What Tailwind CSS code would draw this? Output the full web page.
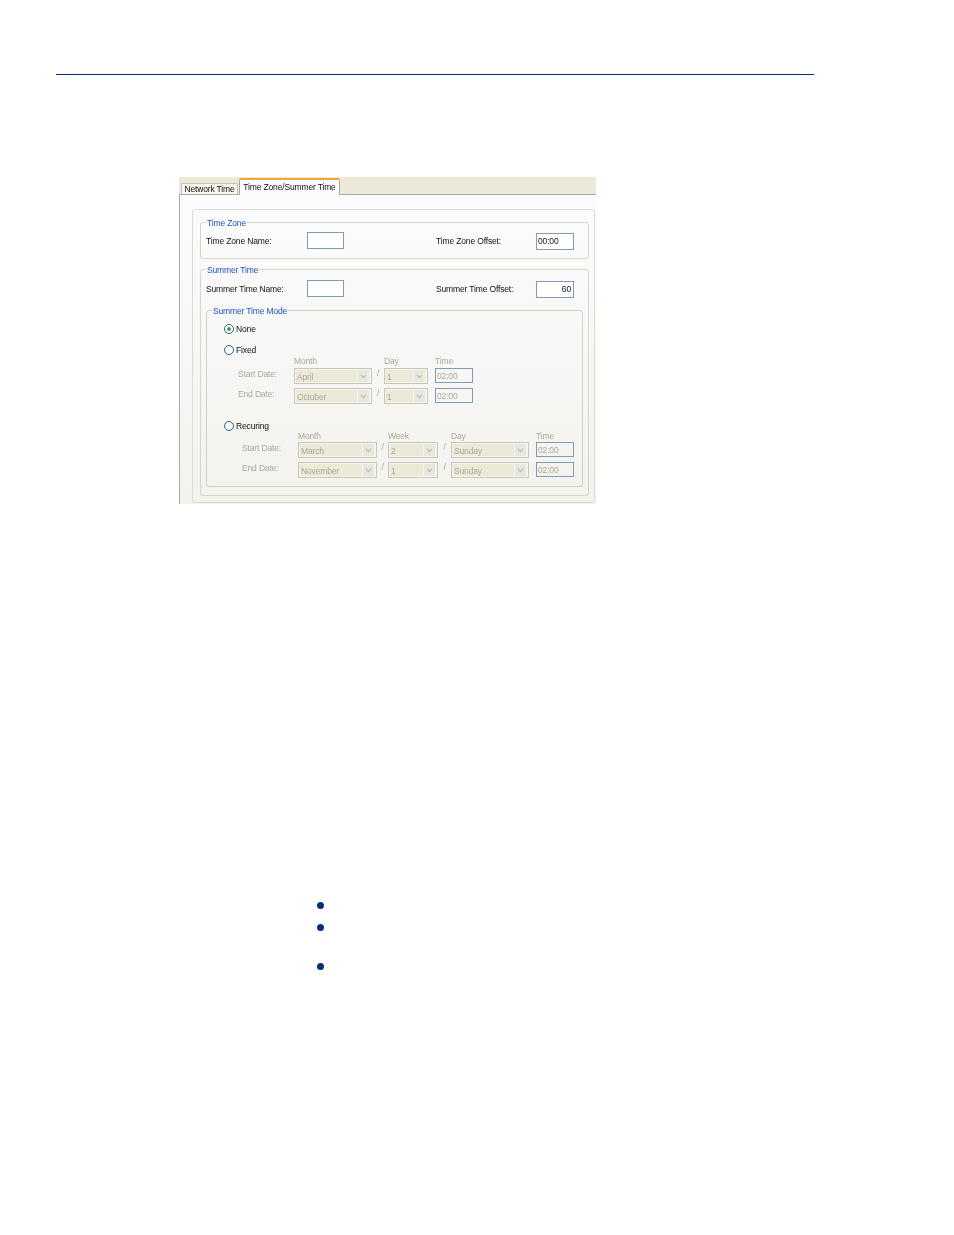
<!DOCTYPE html>
<html>
<head>
<meta charset="utf-8">
<script src="https://cdn.jsdelivr.net/npm/@tailwindcss/browser@4"></script>
</head>
<body class="bg-white font-['Liberation_Sans',sans-serif]">
<div class="w-[954px] h-[1235px] overflow-hidden pt-[74px]">
  <div class="ml-[56px] w-[758px] h-px bg-[#0b2d7b]"></div>

  <div class="ml-[179px] mt-[102px] w-[417px] h-[327px] flex flex-col text-[8.5px] tracking-[-0.15px] leading-[10px] text-[#111] whitespace-nowrap blur-[0.3px]">
    <div class="h-[18px] shrink-0 bg-[#ece9d8] border-b border-[#a9aca0] flex items-end pl-[2px]">
      <div class="w-[57px] h-[11px] bg-[#f6f5ee] border border-b-0 border-[#c3c3b4] rounded-t-[2px] flex items-center justify-center text-[#111]">Network Time</div>
      <div class="w-[101px] h-[17px] -mb-px ml-px bg-[#fcfcfe] border-x border-[#a9aca0] border-t-2 border-t-[#f0a92e] rounded-t-[2px] flex justify-center pt-[2px]">Time Zone/Summer Time</div>
    </div>
    <div class="flex-1 border-l border-[#a9aca0] bg-linear-to-b from-[#fcfcfe] to-[#f3f2ed] pl-[12px] pt-[14px]">
      <div class="w-[403px] h-[294px] border border-[#dcdcce] rounded-[3px] pl-[7px] pt-[12px]">

        <div class="relative w-[389px] h-[37px] border border-[#d6d6c6] rounded-[3px]">
          <div class="absolute -top-[5px] left-[5px] px-px bg-[#fbfbfb] text-[#1d53c4]">Time Zone</div>
          <div class="flex items-start pl-[5px] pt-[9px]">
            <div class="w-[101px] h-[17px] flex items-center">Time Zone Name:</div>
            <div class="w-[37px] h-[17px] border border-[#7f9db9] bg-white"></div>
            <div class="ml-[92px] w-[100px] h-[17px] flex items-center">Time Zone Offset:</div>
            <div class="w-[38px] h-[17px] mt-px border border-[#7f9db9] bg-white flex items-center pl-[1px] pb-px">00:00</div>
          </div>
        </div>

        <div class="relative mt-[10px] w-[389px] h-[227px] border border-[#d6d6c6] rounded-[3px]">
          <div class="absolute -top-[5px] left-[5px] px-px bg-[#f9f9f7] text-[#1d53c4]">Summer Time</div>
          <div class="flex items-start pl-[5px] pt-[10px]">
            <div class="w-[101px] h-[17px] flex items-center">Summer Time Name:</div>
            <div class="w-[37px] h-[17px] border border-[#7f9db9] bg-white"></div>
            <div class="ml-[92px] w-[100px] h-[17px] flex items-center">Summer Time Offset:</div>
            <div class="w-[38px] h-[17px] mt-px border border-[#7f9db9] bg-white flex items-center justify-end pr-[2px] pb-px">60</div>
          </div>

          <div class="relative ml-[5px] mt-[12px] w-[377px] h-[177px] border border-[#d0d0c0] rounded-[3px]">
            <div class="absolute -top-[5px] left-[5px] px-px bg-[#f7f7f4] text-[#1d53c4]">Summer Time Mode</div>

            <div class="ml-[17px] mt-[13px] h-[10px] flex items-center gap-[2px]">
              <div class="w-[10px] h-[10px] rounded-full border border-[#2f5f8f] bg-white flex items-center justify-center"><div class="w-[4px] h-[4px] rounded-full bg-[#3fa24a]"></div></div>
              <span>None</span>
            </div>

            <div class="ml-[17px] mt-[11px] h-[10px] flex items-center gap-[2px]">
              <div class="w-[10px] h-[10px] rounded-full border border-[#2f5f8f] bg-white"></div>
              <span>Fixed</span>
            </div>

            <div class="ml-[87px] mt-px h-[10px] flex text-[#aca899]">
              <div class="w-[90px]">Month</div><div class="w-[51px]">Day</div><div>Time</div>
            </div>
            <div class="ml-[31px] mt-[2px] h-[16px] flex text-[#aca899]">
              <div class="w-[56px] mt-px">Start Date:</div>
              <div class="w-[78px] h-[16px] border border-[#c9c7ba] bg-[#f4f3ee] flex p-px"><span class="flex-1 bg-[#ece9d8] pl-px pt-px flex items-center">April</span><div class="ml-px mr-px w-[11px] bg-[#e8e7df] flex items-center justify-center"><svg width="7" height="5" viewBox="0 0 7 5"><path d="M1 1l2.5 2.5L6 1" fill="none" stroke="#c2c0b6" stroke-width="1.4"/></svg></div></div>
              <div class="w-[12px] text-center">/</div>
              <div class="w-[44px] h-[16px] border border-[#c9c7ba] bg-[#f4f3ee] flex p-px"><span class="flex-1 bg-[#ece9d8] pl-px pt-px flex items-center">1</span><div class="ml-px mr-px w-[11px] bg-[#e8e7df] flex items-center justify-center"><svg width="7" height="5" viewBox="0 0 7 5"><path d="M1 1l2.5 2.5L6 1" fill="none" stroke="#c2c0b6" stroke-width="1.4"/></svg></div></div>
              <div class="ml-[7px] w-[38px] h-[15px] border border-[#7f9db9] flex items-center pl-[1px]">02:00</div>
            </div>
            <div class="ml-[31px] mt-[4px] h-[16px] flex text-[#aca899]">
              <div class="w-[56px] mt-px">End Date:</div>
              <div class="w-[78px] h-[16px] border border-[#c9c7ba] bg-[#f4f3ee] flex p-px"><span class="flex-1 bg-[#ece9d8] pl-px pt-px flex items-center">October</span><div class="ml-px mr-px w-[11px] bg-[#e8e7df] flex items-center justify-center"><svg width="7" height="5" viewBox="0 0 7 5"><path d="M1 1l2.5 2.5L6 1" fill="none" stroke="#c2c0b6" stroke-width="1.4"/></svg></div></div>
              <div class="w-[12px] text-center">/</div>
              <div class="w-[44px] h-[16px] border border-[#c9c7ba] bg-[#f4f3ee] flex p-px"><span class="flex-1 bg-[#ece9d8] pl-px pt-px flex items-center">1</span><div class="ml-px mr-px w-[11px] bg-[#e8e7df] flex items-center justify-center"><svg width="7" height="5" viewBox="0 0 7 5"><path d="M1 1l2.5 2.5L6 1" fill="none" stroke="#c2c0b6" stroke-width="1.4"/></svg></div></div>
              <div class="ml-[7px] w-[38px] h-[15px] border border-[#7f9db9] flex items-center pl-[1px]">02:00</div>
            </div>

            <div class="ml-[17px] mt-[17px] h-[10px] flex items-center gap-[2px]">
              <div class="w-[10px] h-[10px] rounded-full border border-[#2f5f8f] bg-white"></div>
              <span>Recuring</span>
            </div>

            <div class="ml-[91px] h-[10px] flex text-[#aca899]">
              <div class="w-[90px]">Month</div><div class="w-[63px]">Week</div><div class="w-[85px]">Day</div><div>Time</div>
            </div>
            <div class="ml-[35px] mt-px h-[16px] flex text-[#aca899]">
              <div class="w-[56px] mt-px">Start Date:</div>
              <div class="w-[79px] h-[16px] border border-[#c9c7ba] bg-[#f4f3ee] flex p-px"><span class="flex-1 bg-[#ece9d8] pl-px pt-px flex items-center">March</span><div class="ml-px mr-px w-[11px] bg-[#e8e7df] flex items-center justify-center"><svg width="7" height="5" viewBox="0 0 7 5"><path d="M1 1l2.5 2.5L6 1" fill="none" stroke="#c2c0b6" stroke-width="1.4"/></svg></div></div>
              <div class="w-[11px] text-center">/</div>
              <div class="w-[50px] h-[16px] border border-[#c9c7ba] bg-[#f4f3ee] flex p-px"><span class="flex-1 bg-[#ece9d8] pl-px pt-px flex items-center">2</span><div class="ml-px mr-px w-[11px] bg-[#e8e7df] flex items-center justify-center"><svg width="7" height="5" viewBox="0 0 7 5"><path d="M1 1l2.5 2.5L6 1" fill="none" stroke="#c2c0b6" stroke-width="1.4"/></svg></div></div>
              <div class="w-[13px] text-center">/</div>
              <div class="w-[78px] h-[16px] border border-[#c9c7ba] bg-[#f4f3ee] flex p-px"><span class="flex-1 bg-[#ece9d8] pl-px pt-px flex items-center">Sunday</span><div class="ml-px mr-px w-[11px] bg-[#e8e7df] flex items-center justify-center"><svg width="7" height="5" viewBox="0 0 7 5"><path d="M1 1l2.5 2.5L6 1" fill="none" stroke="#c2c0b6" stroke-width="1.4"/></svg></div></div>
              <div class="ml-[7px] w-[38px] h-[15px] border border-[#7f9db9] flex items-center pl-[1px]">02:00</div>
            </div>
            <div class="ml-[35px] mt-[4px] h-[16px] flex text-[#aca899]">
              <div class="w-[56px] mt-px">End Date:</div>
              <div class="w-[79px] h-[16px] border border-[#c9c7ba] bg-[#f4f3ee] flex p-px"><span class="flex-1 bg-[#ece9d8] pl-px pt-px flex items-center">November</span><div class="ml-px mr-px w-[11px] bg-[#e8e7df] flex items-center justify-center"><svg width="7" height="5" viewBox="0 0 7 5"><path d="M1 1l2.5 2.5L6 1" fill="none" stroke="#c2c0b6" stroke-width="1.4"/></svg></div></div>
              <div class="w-[11px] text-center">/</div>
              <div class="w-[50px] h-[16px] border border-[#c9c7ba] bg-[#f4f3ee] flex p-px"><span class="flex-1 bg-[#ece9d8] pl-px pt-px flex items-center">1</span><div class="ml-px mr-px w-[11px] bg-[#e8e7df] flex items-center justify-center"><svg width="7" height="5" viewBox="0 0 7 5"><path d="M1 1l2.5 2.5L6 1" fill="none" stroke="#c2c0b6" stroke-width="1.4"/></svg></div></div>
              <div class="w-[13px] text-center">/</div>
              <div class="w-[78px] h-[16px] border border-[#c9c7ba] bg-[#f4f3ee] flex p-px"><span class="flex-1 bg-[#ece9d8] pl-px pt-px flex items-center">Sunday</span><div class="ml-px mr-px w-[11px] bg-[#e8e7df] flex items-center justify-center"><svg width="7" height="5" viewBox="0 0 7 5"><path d="M1 1l2.5 2.5L6 1" fill="none" stroke="#c2c0b6" stroke-width="1.4"/></svg></div></div>
              <div class="ml-[7px] w-[38px] h-[15px] border border-[#7f9db9] flex items-center pl-[1px]">02:00</div>
            </div>
          </div>
        </div>
      </div>
    </div>
  </div>

  <div class="ml-[317px] mt-[398px] flex flex-col">
    <div class="w-[7px] h-[7px] rounded-full bg-[#0b2d7b]"></div>
    <div class="mt-[15px] w-[7px] h-[7px] rounded-full bg-[#0b2d7b]"></div>
    <div class="mt-[32px] w-[7px] h-[7px] rounded-full bg-[#0b2d7b]"></div>
  </div>
</div>
</body>
</html>
